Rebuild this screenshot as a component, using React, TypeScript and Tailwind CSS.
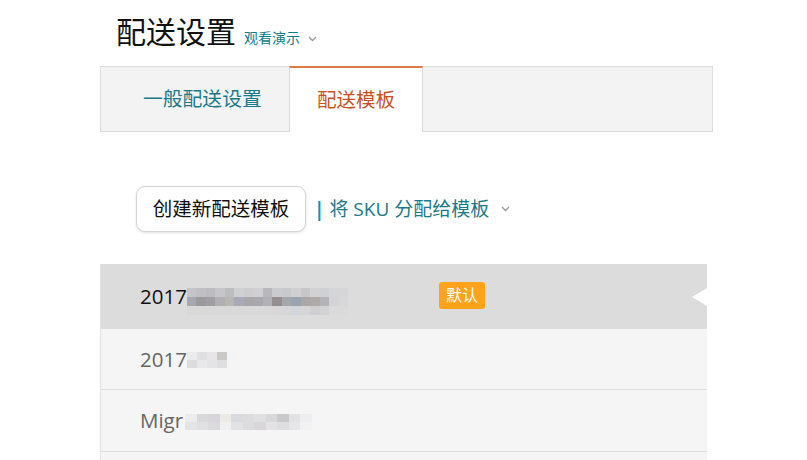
import React from "react";

const FONT = { fontFamily: '"Open Sans", "Noto Sans CJK SC", "Noto Sans", sans-serif' };

function Mosaic({ rows, size = 9, h = 10 }: { rows: string[][]; size?: number; h?: number }) {
  return (
    <div className="flex flex-col blur-[0.6px]">
      {rows.map((r, i) => (
        <div key={i} className="flex">
          {r.map((c, j) => (
            <div key={j} style={{ width: size, height: h, background: c }} />
          ))}
        </div>
      ))}
    </div>
  );
}

const m1 = [
  ["#c4c4c8", "#c0c0c4", "#bcbcc0", "#c6c6c8", "#bdbdbf", "#cfd0d2", "#cdcdcf", "#d0d0d2", "#b8b8bc", "#cbcbcd", "#c8c9cc", "#cfcfd1", "#c7c7ca", "#d2d2d4", "#cfd0d3", "#d5d5d8", "#d6d6d8"],
  ["#a7a7b0", "#9c9a9c", "#a09e9e", "#b0b0b4", "#bab6b4", "#a9a9b8", "#a8a8ac", "#a9a9ad", "#b0b0b6", "#938e8f", "#a4a8ab", "#9aa3b0", "#a9a7a8", "#aeaaa8", "#b4b4b8", "#d4d4d6", "#d8d8da"],
  ["#d9d9da", "#d9d9da", "#d9d9da", "#d9d9da", "#d9d9da", "#d9d9da", "#d9d9da", "#d9d9da", "#d9d9da", "#d8d6d6", "#d6d6d8", "#d2d6dc", "#d6d6d8", "#cfcfd1", "#d3d3d5", "#dadadb", "#dadadb"],
];
const m2 = [
  ["#ebebed", "#e0e0e2", "#e6e6e8", "#cbc8c8", "#f2f4f6"],
  ["#dcdcde", "#e8e8ea", "#e4e4e6", "#dedede", "#f5f5f5"],
];
const m3 = [
  ["#ececee", "#d9d9db", "#d6d6d8", "#eceae6", "#d8dade", "#dcdcde", "#e0e0e2", "#d9d8d8", "#c9c9cb", "#e2e2e4", "#eeeef0"],
  ["#e4e4e6", "#e0e0e2", "#dadadc", "#f0f0f0", "#e2e2e4", "#dcdcde", "#d8d6d6", "#e3e3e5", "#dedede", "#e6e6e8", "#f2f2f2"],
];

function Chevron({ className = "" }: { className?: string }) {
  return (
    <svg width="9" height="6" viewBox="0 0 9 6" className={className}>
      <path d="M1 1l3.5 3.5L8 1" fill="none" stroke="#999" strokeWidth="1.3" />
    </svg>
  );
}

export default function App() {
  return (
    <div className="w-[807px] h-[460px] overflow-hidden bg-white" style={FONT}>
      <div className="pl-[100px] w-[713px]">
        <div className="flex items-end h-[66px] pb-[19px] pl-[16px]">
          <span className="text-[30px] leading-[30px] text-[#111]">配送设置</span>
          <span className="ml-[8px] text-[14px] leading-[14px] text-[#0a7e8c] mb-[2px]">观看演示</span>
          <Chevron className="ml-[8px] mb-[5px]" />
        </div>
        <div className="flex h-[66px] bg-[#f3f3f3] border border-[#dcdcdc]">
          <div className="w-[188px] flex items-center pl-[42px] text-[19.8px] text-[#1b7a8a]">一般配送设置</div>
          <div className="w-[134px] -mt-px -mb-px bg-white border-t-2 border-t-[#e07a45] border-x border-x-[#dcdcdc] flex items-center justify-center text-[19.5px] text-[#c7511f] pb-[1px]">配送模板</div>
          <div className="flex-1" />
        </div>
        <div className="flex items-center h-[132px] pl-[36px] pt-[22px]">
          <div className="h-[46px] w-[170px] flex items-center justify-center rounded-[9px] border border-[#d5d5d5] bg-white shadow-[0_1px_3px_rgba(0,0,0,0.12)] text-[19.5px] text-[#111]">创建新配送模板</div>
          <span className="ml-[8px] text-[19px] text-[#1b7a8a]">
            <span className="font-bold text-[#1a8fb0]">|</span> 将 SKU 分配给模板
          </span>
          <Chevron className="ml-[12px]" />
        </div>
        <div className="w-[607px] border-l border-[#e2e2e2]">
          <div className="relative flex items-center h-[64px] bg-[#dcdcdc] pl-[39px]">
            <span className="text-[20.5px] text-[#111]">2017</span>
            <div className="mt-[10px]"><Mosaic rows={m1} size={9.5} h={9} /></div>
            <div className="absolute left-[338px] top-[18px] h-[27px] px-[7px] rounded-[3px] bg-[#ffa31a] text-white text-[16px] leading-[27px]">默认</div>
            <div className="absolute right-0 top-[24px] w-0 h-0 border-y-[9px] border-y-transparent border-r-[15px] border-r-white" />
          </div>
          <div className="flex items-center h-[61px] bg-[#f5f5f5] border-t border-[#dddddd] pl-[39px]">
            <span className="text-[20.5px] text-[#666]">2017</span>
            <div className="mt-[2px]"><Mosaic rows={m2} size={10} h={8} /></div>
          </div>
          <div className="flex items-center h-[62px] bg-[#f5f5f5] border-t border-[#dddddd] pl-[39px]">
            <span className="text-[20.5px] text-[#666]">Migr</span>
            <div className="mt-[3px] ml-[2px]"><Mosaic rows={m3} size={11.5} h={8} /></div>
          </div>
          <div className="h-[40px] bg-[#f5f5f5] border-t border-[#dddddd]" />
        </div>
      </div>
    </div>
  );
}
